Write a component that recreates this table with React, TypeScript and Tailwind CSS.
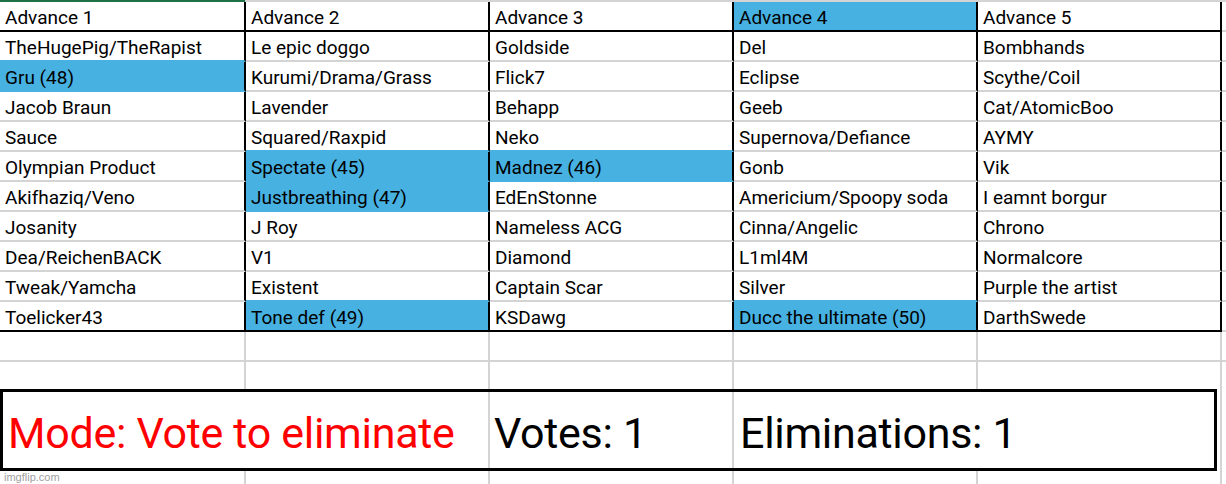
const columns: string[][] = [
  ["Advance 1", "TheHugePig/TheRapist", "Gru (48)", "Jacob Braun", "Sauce", "Olympian Product", "Akifhaziq/Veno", "Josanity", "Dea/ReichenBACK", "Tweak/Yamcha", "Toelicker43"],
  ["Advance 2", "Le epic doggo", "Kurumi/Drama/Grass", "Lavender", "Squared/Raxpid", "Spectate (45)", "Justbreathing (47)", "J Roy", "V1", "Existent", "Tone def (49)"],
  ["Advance 3", "Goldside", "Flick7", "Behapp", "Neko", "Madnez (46)", "EdEnStonne", "Nameless ACG", "Diamond", "Captain Scar", "KSDawg"],
  ["Advance 4", "Del", "Eclipse", "Geeb", "Supernova/Defiance", "Gonb", "Americium/Spoopy soda", "Cinna/Angelic", "L1ml4M", "Silver", "Ducc the ultimate (50)"],
  ["Advance 5", "Bombhands", "Scythe/Coil", "Cat/AtomicBoo", "AYMY", "Vik", "I eamnt borgur", "Chrono", "Normalcore", "Purple the artist", "DarthSwede"],
];

// cells filled light blue, "row-col"
const filled = new Set(["2-0", "5-1", "6-1", "10-1", "5-2", "0-3", "10-3"]);
const widths = ["w-[246px]", "w-[244px]", "w-[244px]", "w-[244px]", "w-[244px]"];

const isBlue = (r: number, c: number) => filled.has(`${r}-${c}`);

function bottomLine(r: number, c: number) {
  if (r === 0 || r === 10) return "border-b-black";
  if (isBlue(r, c) || isBlue(r + 1, c)) return "border-b-[#47b1e1]";
  return "border-b-[#d4d4d4]";
}

function DataRow({ r }: { r: number }) {
  return (
    <div className="flex h-[30px]">
      {columns.map((col, c) => (
        <div
          key={c}
          className={`${widths[c]} shrink-0 h-[30px] border-b-2 border-r-2 border-r-black ${bottomLine(r, c)} ${
            isBlue(r, c) ? "bg-[#47b1e1]" : "bg-white"
          } pl-[5px] pt-[2px] leading-[28px] whitespace-nowrap text-[19px] text-black`}>
          {col[r]}
        </div>
      ))}
      <div className="flex-1 h-[30px] border-b-2 border-b-[#d4d4d4]" />
    </div>
  );
}

function EmptyRow({ h, bottom = true, children }: { h: string; bottom?: boolean; children?: React.ReactNode }) {
  return (
    <div className={`flex ${h}`}>
      {widths.map((w, c) => (
        <div
          key={c}
          className={`${w} shrink-0 border-r-2 border-r-[#d4d4d4] ${bottom ? "border-b-2 border-b-[#d4d4d4]" : ""}`}>
          {c === 0 ? children : null}
        </div>
      ))}
      <div className={`flex-1 ${bottom ? "border-b-2 border-b-[#d4d4d4]" : ""}`} />
    </div>
  );
}

export default function App() {
  return (
    <div className="w-[1226px] h-[484px] overflow-hidden bg-white font-['Roboto',sans-serif]">
      <div className="flex h-[2px]">
        <div className="w-[245px] bg-[#1e7145]" />
        <div className="flex-1 bg-[#d4d4d4]" />
      </div>
      {columns[0].map((_, r) => (
        <DataRow key={r} r={r} />
      ))}
      <EmptyRow h="h-[30px]" />
      <EmptyRow h="h-[27px]" bottom={false} />

      <div className="flex h-[82px]">
        <div className="flex w-[1217px] shrink-0 border-[3px] border-black text-[43px] tracking-[-0.3px] leading-[76px] whitespace-nowrap">
          <div className="w-[487px] shrink-0 border-r-2 border-r-[#d4d4d4] pl-[5px] pt-[3px] text-[#ff0000]">
            Mode: Vote to eliminate
          </div>
          <div className="w-[244px] shrink-0 border-r-2 border-r-[#d4d4d4] pl-[4px] pt-[3px] text-black">Votes: 1</div>
          <div className="flex-1 pl-[6px] pt-[3px] text-black">Eliminations: 1</div>
        </div>
        <div className="w-[5px] shrink-0 border-r-2 border-r-[#d4d4d4]" />
        <div className="flex-1" />
      </div>

      <EmptyRow h="h-[20px]" bottom={false}>
        <span className="block pl-[4px] text-[11px] leading-[13px] text-[#a0a0a0] font-['Liberation_Sans',sans-serif]">
          imgflip.com
        </span>
      </EmptyRow>
    </div>
  );
}
